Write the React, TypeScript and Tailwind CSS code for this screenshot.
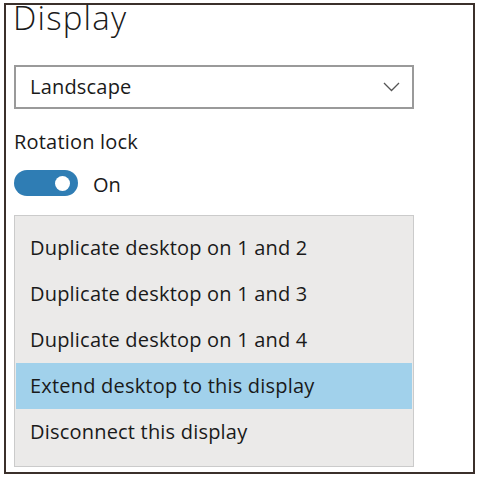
import React from "react";

const options = [
  "Duplicate desktop on 1 and 2",
  "Duplicate desktop on 1 and 3",
  "Duplicate desktop on 1 and 4",
  "Extend desktop to this display",
  "Disconnect this display",
];

const ChevronDown = () => (
  <svg width="17" height="10" viewBox="0 0 17 10" fill="none">
    <path d="M1 1 L8.5 8.5 L16 1" stroke="#555" strokeWidth="1.3" />
  </svg>
);

const App: React.FC = () => {
  const selected = 3;

  return (
    <div
      className="w-[478px] h-[477px] bg-white pt-[3px] pl-[4px]"
      style={{ fontFamily: '"Open Sans", "Noto Sans", sans-serif' }}
    >
      <div className="w-[471px] h-[471px] border-2 border-[#3b302b] flex flex-col text-[#1a1a1a]">
        <div className="mt-[-2px] ml-[7px] text-[33px] leading-[30px] font-light tracking-[1.2px]">
          Display
        </div>

        {/* orientation dropdown */}
        <div className="mt-[32px] ml-[8px] w-[400px] h-[44px] border-2 border-[#9a9a9a] flex items-center justify-between pl-[14px] pr-[12px]">
          <span className="text-[20px] leading-[24px] tracking-[0.2px]">Landscape</span>
          <ChevronDown />
        </div>

        <div className="mt-[21px] ml-[8px] text-[20px] leading-[24px] tracking-[0.2px]">Rotation lock</div>

        {/* toggle */}
        <div className="mt-[16px] ml-[8px] flex items-start gap-[15px]">
          <div className="w-[64px] h-[26px] rounded-full bg-[#2f7db4] flex items-center justify-end pr-[8px]">
            <div className="w-[15px] h-[15px] rounded-full bg-white" />
          </div>
          <span className="mt-[3px] text-[20px] leading-[24px]">On</span>
        </div>

        {/* display mode menu */}
        <div className="mt-[18px] ml-[8px] w-[400px] h-[252px] border border-[#cbcbcb] bg-[#ebeae9] pt-[9px] px-px">
          {options.map((label, i) => (
            <div
              key={label}
              className={
                "h-[46px] flex items-center pl-[14px] text-[20px] leading-[24px] tracking-[0.2px] " +
                (i === selected ? "bg-[#a1d1eb]" : "")
              }
            >
              {label}
            </div>
          ))}
        </div>
      </div>
    </div>
  );
};

export default App;
